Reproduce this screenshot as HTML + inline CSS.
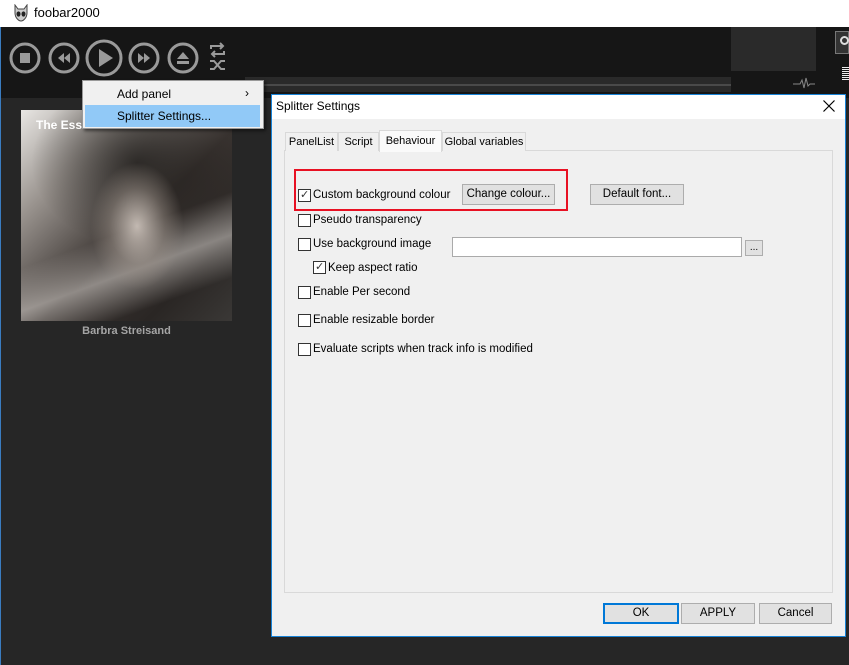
<!DOCTYPE html>
<html><head><meta charset="utf-8"><style>
*{margin:0;padding:0;box-sizing:border-box}
body{width:849px;height:665px;overflow:hidden;background:#262626;font-family:"Liberation Sans",sans-serif;font-size:11px;position:relative}
.a{position:absolute}
.btn{position:absolute;background:#e1e1e1;border:1px solid #adadad;text-align:center;line-height:19px;color:#000;font-size:11.5px}
.cb{position:absolute;width:13px;height:13px;border:1px solid #333;background:#fff}
.lbl{position:absolute;font-size:11.5px;color:#000}
</style></head><body>
<div class="a" style="left:0;top:0;width:849px;height:27px;background:#fff"></div>
<svg class="a" style="left:13px;top:4px" width="16" height="18" viewBox="0 0 16 18"><path d="M2 1 L5 5 L11 5 L14 1 L14 9 C14 14 10 17 8 17 C6 17 2 14 2 9Z" fill="#ccc" stroke="#444"/><ellipse cx="5.5" cy="10" rx="2" ry="2.6" fill="#222"/><ellipse cx="10.5" cy="10" rx="2" ry="2.6" fill="#222"/></svg>
<div class="a" style="left:34px;top:5px;font-size:13px;color:#000">foobar2000</div>
<div class="a" style="left:0;top:27px;width:849px;height:71px;background:#161616"></div>
<div class="a" style="left:0;top:27px;width:1px;height:638px;background:#3a7cc0"></div>
<div class="a" style="left:731px;top:27px;width:85px;height:44px;background:#2a2a2a"></div>
<div class="a" style="left:245px;top:77px;width:486px;height:15px;background:#2a2a2a"></div>
<div class="a" style="left:245px;top:84px;width:486px;height:2px;background:#4a4a4a"></div>
<svg class="a" style="left:0;top:30px" width="240" height="56">
<g fill="none" stroke="#9a9a9a" stroke-width="3">
<circle cx="25" cy="28" r="14"/><circle cx="64" cy="28" r="14"/><circle cx="104" cy="28" r="17"/><circle cx="144" cy="28" r="14"/><circle cx="183" cy="28" r="14"/>
</g>
<g fill="#9a9a9a">
<rect x="20" y="23" width="10" height="10"/>
<path d="M58 28 L64 23 L64 33Z M64 28 L70 23 L70 33Z"/>
<path d="M99 19 L113 28 L99 37Z"/>
<path d="M138 23 L144 28 L138 33Z M144 23 L150 28 L144 33Z"/>
<path d="M177 29 L183 22 L189 29Z"/><rect x="177" y="31" width="12" height="3"/>
</g>
<g fill="none" stroke="#9a9a9a" stroke-width="2">
<path d="M211 19 v-3 h12 M220 13 l3 3 l-3 3"/>
<path d="M224 21 v3 h-12 M215 27 l-3 -3 l3 -3"/>
<path d="M210 31 l4 0 l7 8 l4 0 M210 39 l4 0 l7 -8 l4 0"/>
</g></svg>
<svg class="a" style="left:793px;top:77px" width="22" height="14"><path d="M0 7 H7 L9 3 L11 11 L13 1 L15 9 L17 7 H22" stroke="#888" fill="none"/></svg>
<div class="a" style="left:835px;top:31px;width:14px;height:23px;border:1px solid #777;background:#333"></div>
<div class="a" style="left:840px;top:36px;width:9px;height:9px;border:2px solid #ddd;border-radius:50%"></div>
<div class="a" style="left:842px;top:67px;width:7px;height:13px;background:repeating-linear-gradient(#eee 0 1px,#161616 1px 2px)"></div>
<div class="a" style="left:21px;top:110px;width:211px;height:211px;background:linear-gradient(135deg,#e8e6e3 0%,#9a948f 25%,#3a3431 55%,#2a2624 80%,#3a3836 100%)"></div>
<div class="a" style="left:21px;top:110px;width:211px;height:211px;background:radial-gradient(ellipse 22% 30% at 55% 55%,rgba(210,200,192,.9),rgba(150,140,132,.5) 60%,transparent 100%),radial-gradient(ellipse 50% 40% at 55% 25%,rgba(20,18,16,.7),transparent 100%),linear-gradient(160deg,transparent 55%,rgba(230,225,220,.5) 70%,transparent 85%)"></div>
<div class="a" style="left:36px;top:118px;font-size:12px;font-weight:bold;color:#fff">The Esse</div>
<div class="a" style="left:21px;top:325px;width:211px;text-align:center;font-weight:bold;font-size:11px;color:#a5a5a5">Barbra Streisand</div>
<!-- context menu -->
<div class="a" style="left:82px;top:80px;width:182px;height:49px;background:#f0f0f0;border:1px solid #999;box-shadow:2px 2px 3px rgba(0,0,0,.5)"></div>
<div class="a" style="left:85px;top:105px;width:175px;height:22px;background:#91c9f7"></div>
<div class="a" style="left:117px;top:87px;font-size:12px">Add panel</div>
<div class="a" style="left:245px;top:86px;font-size:12px">&#8250;</div>
<div class="a" style="left:117px;top:109px;font-size:12px">Splitter Settings...</div>
<!-- dialog -->
<div class="a" style="left:271px;top:94px;width:575px;height:543px;background:#f0f0f0;border:1px solid #1883d7"></div>
<div class="a" style="left:272px;top:95px;width:573px;height:24px;background:#fff"></div>
<div class="a" style="left:276px;top:99px;font-size:12px">Splitter Settings</div>
<svg class="a" style="left:823px;top:100px" width="12" height="12"><path d="M0.5 0.5 L11.5 11.5 M11.5 0.5 L0.5 11.5" stroke="#000" stroke-width="1.2"/></svg>
<div class="a" style="left:284px;top:150px;width:549px;height:443px;background:#f0f0f0;border:1px solid #d9d9d9"></div>
<div class="a" style="left:285px;top:132px;width:53px;height:19px;border:1px solid #d9d9d9;border-bottom:none;background:#f0f0f0;text-align:center;line-height:18px;font-size:11px">PanelList</div>
<div class="a" style="left:338px;top:132px;width:41px;height:19px;border:1px solid #d9d9d9;border-bottom:none;background:#f0f0f0;text-align:center;line-height:18px;font-size:11px">Script</div>
<div class="a" style="left:379px;top:130px;width:63px;height:22px;border:1px solid #d9d9d9;border-bottom:none;background:#fafafa;text-align:center;line-height:20px;font-size:11px">Behaviour</div>
<div class="a" style="left:442px;top:132px;width:84px;height:19px;border:1px solid #d9d9d9;border-bottom:none;background:#f0f0f0;text-align:center;line-height:18px;font-size:11px">Global variables</div>
<div class="a" style="left:294px;top:169px;width:274px;height:42px;border:2px solid #e81123"></div>
<div class="cb" style="left:298px;top:189px"></div><div class="a" style="left:300px;top:188px;font-size:11px;color:#333">&#10003;</div>
<div class="lbl" style="left:313px;top:189px">Custom background colour</div>
<div class="btn" style="left:462px;top:184px;width:93px;height:21px">Change colour...</div>
<div class="btn" style="left:590px;top:184px;width:94px;height:21px">Default font...</div>
<div class="cb" style="left:298px;top:214px"></div><div class="lbl" style="left:313px;top:214px">Pseudo transparency</div>
<div class="cb" style="left:298px;top:238px"></div><div class="lbl" style="left:313px;top:238px">Use background image</div>
<div class="a" style="left:452px;top:237px;width:290px;height:20px;background:#fff;border:1px solid #aaa"></div>
<div class="a" style="left:745px;top:240px;width:18px;height:16px;background:#e1e1e1;border:1px solid #adadad;font-size:10px;text-align:center;line-height:14px">...</div>
<div class="cb" style="left:313px;top:261px"></div><div class="a" style="left:315px;top:260px;font-size:11px;color:#333">&#10003;</div>
<div class="lbl" style="left:328px;top:262px">Keep aspect ratio</div>
<div class="cb" style="left:298px;top:286px"></div><div class="lbl" style="left:313px;top:286px">Enable Per second</div>
<div class="cb" style="left:298px;top:314px"></div><div class="lbl" style="left:313px;top:314px">Enable resizable border</div>
<div class="cb" style="left:298px;top:343px"></div><div class="lbl" style="left:313px;top:343px">Evaluate scripts when track info is modified</div>
<div class="btn" style="left:603px;top:603px;width:76px;height:21px;border:2px solid #0078d7;line-height:17px">OK</div>
<div class="btn" style="left:681px;top:603px;width:74px;height:21px">APPLY</div>
<div class="btn" style="left:759px;top:603px;width:73px;height:21px">Cancel</div>
</body></html>
